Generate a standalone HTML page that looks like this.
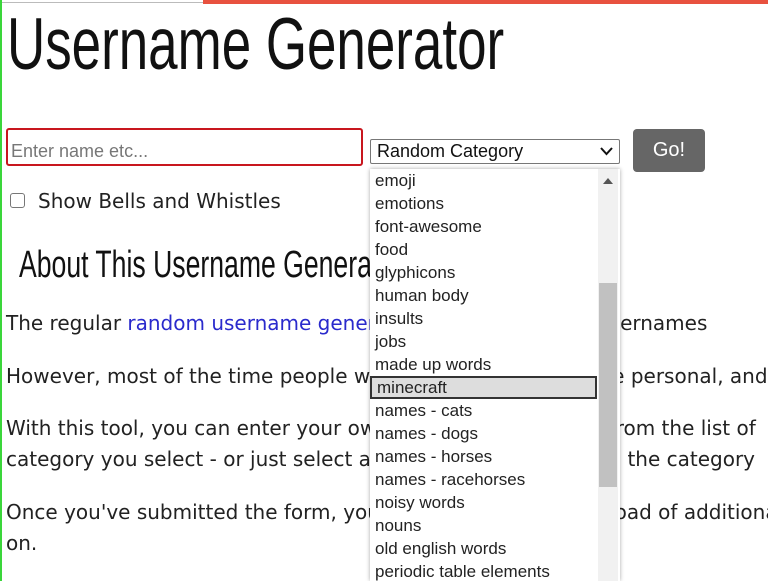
<!DOCTYPE html>
<html style="overflow:hidden;height:581px"><head><style>
body{margin:0;width:768px;height:581px;overflow:hidden;background:#fff;position:relative;font-family:"DejaVu Sans","Liberation Sans",sans-serif}
.a{position:absolute;white-space:nowrap}
.t{font-family:"Liberation Sans",sans-serif;transform-origin:0 0;color:#111}
.p{font-size:20px;color:#222;left:6px}
.dd{position:absolute;z-index:5;left:370px;top:169px;width:250px;height:412px;overflow:hidden;background:#fff;box-shadow:0 0 4px rgba(0,0,0,.35);font-family:"Liberation Sans",sans-serif;font-size:17px;color:#222}
.dd div{height:23px;line-height:23px;padding-left:5px;width:222px;box-sizing:border-box}
</style></head><body>
<div class="a" style="left:0;top:0;width:2px;height:581px;background:#3ad63a"></div>
<div class="a" style="left:2px;top:0;width:201px;height:3px;border-bottom:1px solid #bbb;box-sizing:border-box"></div>
<div class="a" style="left:203px;top:0;width:565px;height:4px;background:#e8513f"></div>
<div class="a t" style="left:7px;top:3px;font-size:73px;transform:scaleX(.725)">Username Generator</div>
<div class="a" style="left:6px;top:128px;width:357px;height:38px;border:2px solid #c8161e;border-radius:3px;box-sizing:border-box"></div>
<div class="a" style="left:11px;top:141px;font-family:'Liberation Sans',sans-serif;font-size:18px;color:#777">Enter name etc...</div>
<div class="a" style="left:370px;top:139px;width:250px;height:25px;border:1px solid #777;border-radius:2px;box-sizing:border-box;font-family:'Liberation Sans',sans-serif;font-size:18px;padding:1px 6px;color:#111">Random Category
<svg style="position:absolute;right:6px;top:7px" width="13" height="9"><path d="M1 1 L6.5 7 L12 1" stroke="#111" stroke-width="2" fill="none"/></svg></div>
<div class="a" style="left:633px;top:129px;width:72px;height:43px;background:#666;border-radius:4px;color:#fff;font-family:'Liberation Sans',sans-serif;font-size:20px;text-align:center;line-height:43px">Go!</div>
<div class="a" style="left:10px;top:193px;width:15px;height:15px;border:1px solid #777;border-radius:3px;box-sizing:border-box"></div>
<div class="a" style="left:38px;top:189px;font-size:20px;color:#222">Show Bells and Whistles</div>
<div class="a t" style="left:19px;top:244px;font-size:38px;transform:scaleX(.7)">About This Username Generator</div>
<div class="a p" style="top:311px">The regular <span style="color:#2a2acc">random username generator</span> has a few lists of usernames</div>
<div class="a p" style="top:364px">However, most of the time people want something a bit more personal, and</div>
<div class="a p" style="top:416px">With this tool, you can enter your own name and it will pick from the list of</div>
<div class="a p" style="top:447px">category you select - or just select a random one if you leave the category</div>
<div class="a p" style="top:500px">Once you've submitted the form, you'll be presented with a load of additional</div>
<div class="a p" style="top:531px">on.</div>
<div class="dd">
<div>emoji</div><div>emotions</div><div>font-awesome</div><div>food</div><div>glyphicons</div><div>human body</div><div>insults</div><div>jobs</div><div>made up words</div>
<div style="background:#ddd;border:2px solid #333;line-height:19px;width:227px">minecraft</div>
<div>names - cats</div><div>names - dogs</div><div>names - horses</div><div>names - racehorses</div><div>noisy words</div><div>nouns</div><div>old english words</div><div>periodic table elements</div>
<div style="position:absolute;left:228px;top:0;width:20px;height:420px;background:#f1f1f1;padding:0"></div>
<div style="position:absolute;left:229px;top:114px;width:18px;height:204px;background:#c1c1c1;padding:0"></div>
<svg style="position:absolute;left:232px;top:8px" width="12" height="8"><path d="M1 7 L6 1 L11 7Z" fill="#555"/></svg>
</div>
</body></html>
